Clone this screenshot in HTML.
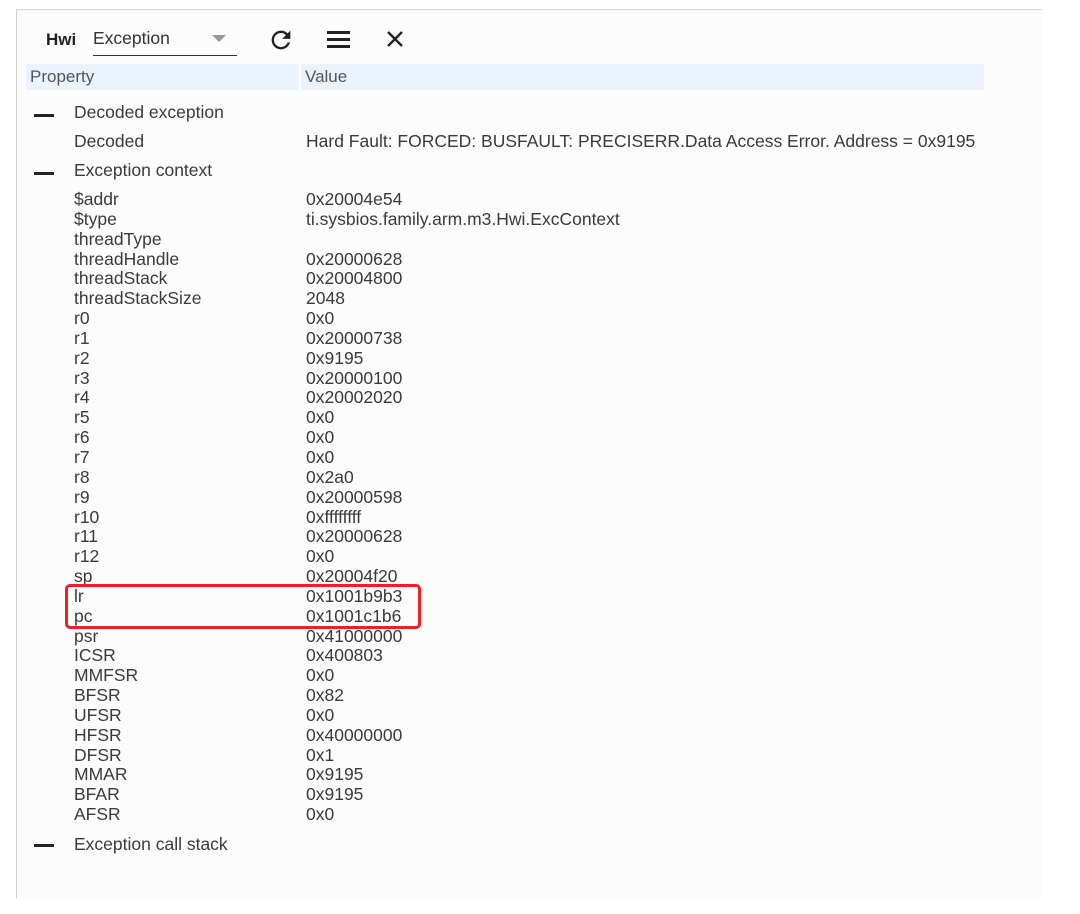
<!DOCTYPE html>
<html><head><meta charset="utf-8"><style>
body{margin:0;width:1080px;height:914px;background:#fff;font-family:"Liberation Sans",sans-serif;color:#3a3a3a;position:relative;overflow:hidden}
.panel{position:absolute;left:16px;top:9px;width:1026px;height:888px;background:#fcfcfc;border-top:1px solid #d8d8d8;border-left:1px solid #d0d0d0}
.a{position:absolute;font-size:17.5px;white-space:nowrap}
.hdr{position:absolute;top:64px;height:26px;background:#ebf3fe;font-size:17px;line-height:26px;color:#555;padding-left:4px;box-sizing:border-box}
.dash{position:absolute;left:34px;width:20px;height:3px;background:#222}
.rows{position:absolute;top:190px;font-size:17.5px;line-height:19.84px}
</style></head><body>
<div class="panel"></div>
<div class="a" style="left:46px;top:30px;font-weight:bold;color:#222;font-size:17px">Hwi</div>
<div class="a" style="left:93px;top:28px;color:#333">Exception</div>
<div style="position:absolute;left:212px;top:35px;width:0;height:0;border-left:7px solid transparent;border-right:7px solid transparent;border-top:7px solid #999"></div>
<div style="position:absolute;left:93px;top:55px;width:144px;height:1px;background:#333"></div>
<svg style="position:absolute;left:267px;top:26px" width="28" height="28" viewBox="0 0 24 24"><path d="M17.65 6.35A7.96 7.96 0 0 0 12 4a8 8 0 1 0 7.73 10h-2.08A6 6 0 1 1 12 6c1.66 0 3.14.69 4.22 1.78L13 11h7V4l-2.35 2.35z" fill="#222"/></svg>
<div style="position:absolute;left:327px;top:31px;width:23px;height:3px;background:#222"></div>
<div style="position:absolute;left:327px;top:38px;width:23px;height:3px;background:#222"></div>
<div style="position:absolute;left:327px;top:45px;width:23px;height:3px;background:#222"></div>
<svg style="position:absolute;left:386px;top:30px" width="18" height="18" viewBox="0 0 18 18"><path d="M2 2L16 16M16 2L2 16" stroke="#222" stroke-width="2.4"/></svg>
<div class="hdr" style="left:26px;width:272px">Property</div>
<div class="hdr" style="left:301px;width:683px">Value</div>
<div class="dash" style="top:114px"></div>
<div class="a" style="left:74px;top:102px">Decoded exception</div>
<div class="a" style="left:74px;top:131px">Decoded</div>
<div class="a" style="left:306px;top:131px">Hard Fault: FORCED: BUSFAULT: PRECISERR.Data Access Error. Address = 0x9195</div>
<div class="dash" style="top:172px"></div>
<div class="a" style="left:74px;top:160px">Exception context</div>
<div class="rows" style="left:74px">$addr<br>$type<br>threadType<br>threadHandle<br>threadStack<br>threadStackSize<br>r0<br>r1<br>r2<br>r3<br>r4<br>r5<br>r6<br>r7<br>r8<br>r9<br>r10<br>r11<br>r12<br>sp<br>lr<br>pc<br>psr<br>ICSR<br>MMFSR<br>BFSR<br>UFSR<br>HFSR<br>DFSR<br>MMAR<br>BFAR<br>AFSR</div>
<div class="rows" style="left:306px">0x20004e54<br>ti.sysbios.family.arm.m3.Hwi.ExcContext<br>&nbsp;<br>0x20000628<br>0x20004800<br>2048<br>0x0<br>0x20000738<br>0x9195<br>0x20000100<br>0x20002020<br>0x0<br>0x0<br>0x0<br>0x2a0<br>0x20000598<br>0xffffffff<br>0x20000628<br>0x0<br>0x20004f20<br>0x1001b9b3<br>0x1001c1b6<br>0x41000000<br>0x400803<br>0x0<br>0x82<br>0x0<br>0x40000000<br>0x1<br>0x9195<br>0x9195<br>0x0</div>
<div style="position:absolute;left:65px;top:584px;width:350px;height:39px;border:3px solid #f02020;border-radius:5px"></div>
<div class="dash" style="top:844px"></div>
<div class="a" style="left:74px;top:834px">Exception call stack</div>
</body></html>
